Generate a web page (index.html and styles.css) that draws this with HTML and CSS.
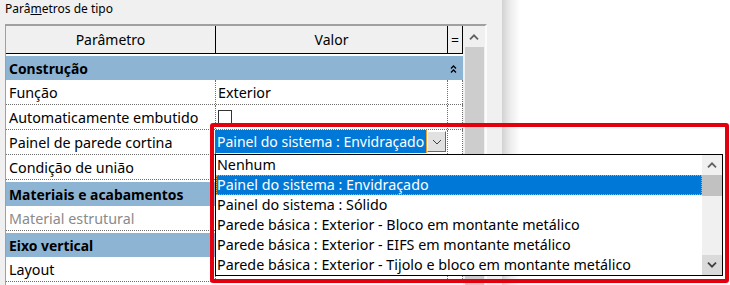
FILE: index.html
```html
<!DOCTYPE html>
<html lang="pt">
<head>
    <meta charset="UTF-8">
    <title>Parâmetros de tipo</title>
    <link rel="stylesheet" href="styles.css">
</head>
<body>

    <div class="panel">
        <div class="title">Parâ<u>m</u>etros de tipo</div>

        <div class="frame">
            <div class="grid">
                <div class="row head">
                    <div class="cell">Parâmetro</div>
                    <div class="cell">Valor</div>
                    <div class="cell">=</div>
                </div>

                <!-- Construção -->
                <div class="group">
                    <span>Construção</span>
                    <svg width="7" height="10" viewBox="0 0 7 10"><path d="M1 4.5 L3.5 2 L6 4.5 M1 8.5 L3.5 6 L6 8.5" fill="none" stroke="#000" stroke-width="1.3"/></svg>
                </div>
                <div class="row">
                    <div class="cell">Função</div>
                    <div class="cell">Exterior</div>
                    <div class="cell"></div>
                </div>
                <div class="row">
                    <div class="cell">Automaticamente embutido</div>
                    <div class="cell"><div class="check"></div></div>
                    <div class="cell"></div>
                </div>
                <div class="row">
                    <div class="cell">Painel de parede cortina</div>
                    <div class="cell edit">
                        <div class="combo">
                            <div class="combo-text">Painel do sistema : Envidraçado</div>
                            <div class="combo-btn">
                                <svg width="10" height="6" viewBox="0 0 10 6"><path d="M1 1 L5 5 L9 1" fill="none" stroke="#404040" stroke-width="1"/></svg>
                            </div>
                        </div>
                    </div>
                    <div class="cell"></div>
                </div>
                <div class="row">
                    <div class="cell">Condição de união</div>
                    <div class="cell"></div>
                    <div class="cell"></div>
                </div>

                <!-- Materiais e acabamentos -->
                <div class="group">
                    <span>Materiais e acabamentos</span>
                    <svg width="7" height="10" viewBox="0 0 7 10"><path d="M1 4.5 L3.5 2 L6 4.5 M1 8.5 L3.5 6 L6 8.5" fill="none" stroke="#000" stroke-width="1.3"/></svg>
                </div>
                <div class="row">
                    <div class="cell muted">Material estrutural</div>
                    <div class="cell"></div>
                    <div class="cell"></div>
                </div>

                <!-- Eixo vertical -->
                <div class="group">
                    <span>Eixo vertical</span>
                    <svg width="7" height="10" viewBox="0 0 7 10"><path d="M1 4.5 L3.5 2 L6 4.5 M1 8.5 L3.5 6 L6 8.5" fill="none" stroke="#000" stroke-width="1.3"/></svg>
                </div>
                <div class="row">
                    <div class="cell">Layout</div>
                    <div class="cell"></div>
                    <div class="cell"></div>
                </div>
            </div>

            <div class="vscroll">
                <div class="arrow">
                    <svg width="10" height="6" viewBox="0 0 10 6"><path d="M1 5.3 L5 1.3 L9 5.3" fill="none" stroke="#606060" stroke-width="1.8"/></svg>
                </div>
                <div class="thumb"></div>
            </div>
        </div>
    </div>
    <div class="shade"></div>

    <!-- open dropdown of the combo -->
    <div class="droplist">
        <div class="items">
            <div class="item">Nenhum</div>
            <div class="item sel">Painel do sistema : Envidraçado</div>
            <div class="item">Painel do sistema : Sólido</div>
            <div class="item">Parede básica : Exterior - Bloco em montante metálico</div>
            <div class="item">Parede básica : Exterior - EIFS em montante metálico</div>
            <div class="item">Parede básica : Exterior - Tijolo e bloco em montante metálico</div>
        </div>
        <div class="lscroll">
            <div class="arrow">
                <svg width="10" height="6" viewBox="0 0 10 6"><path d="M1 5.3 L5 1.3 L9 5.3" fill="none" stroke="#606060" stroke-width="1.8"/></svg>
            </div>
            <div class="lthumb"></div>
            <div class="track"></div>
            <div class="arrow down">
                <svg width="10" height="6" viewBox="0 0 10 6"><path d="M1 0.7 L5 4.7 L9 0.7" fill="none" stroke="#404040" stroke-width="1.8"/></svg>
            </div>
        </div>
    </div>

    <div class="callout"></div>

</body>
</html>
```

FILE: styles.css
```css
body {
    margin: 0;
    height: 285px;
    overflow: hidden;
    display: flex;
    position: relative;
    background-color: #fff;
    font-family: "Noto Sans", sans-serif;
    font-size: 14.3px;
    color: #000;
}
.panel {
    width: 502px;
    flex: none;
    background-color: #f0f0f0;
    display: flex;
    flex-direction: column;
}
.shade {
    width: 18px;
    flex: none;
    background: linear-gradient(to right, #d2d2d2, #ececec 45%, #fff);
}
.title {
    height: 24px;
    box-sizing: border-box;
    padding: 1px 5px 0;
    font-size: 12px;
    line-height: 16px;
}
.title u {
    text-underline-offset: 1px;
}
.frame {
    margin-left: 5px;
    width: 482px;
    flex: 1;
    min-height: 0;
    display: flex;
    box-sizing: border-box;
    border-top: 2px solid #a0a0a0;
    border-left: 1px solid #a0a0a0;
    border-right: 2px solid #fbfbfb;
}
.grid {
    width: 457px;
    background-color: #fff;
}
.row {
    display: grid;
    grid-template-columns: 210px 232px 15px;
    height: 25px;
    box-sizing: border-box;
    border-bottom: 1px dotted #6e6e6e;
}
.cell {
    box-sizing: border-box;
    border-right: 1px dotted #6e6e6e;
    padding-left: 3px;
    line-height: 25px;
    white-space: nowrap;
    overflow: hidden;
}
.row .cell:nth-child(2) {
    padding-left: 2px;
}
.head {
    height: 28px;
    background-color: #f0f0f0;
    border-bottom: 1px solid #000;
    font-size: 14px;
}
.head .cell,
.row.head .cell:nth-child(2) {
    border-right: 1px solid #000;
    text-align: center;
    line-height: 27px;
    padding: 0;
}
.group {
    height: 26px;
    box-sizing: border-box;
    border-top: 2px solid #fff;
    background-color: #8eb4d4;
    display: flex;
    align-items: center;
    justify-content: space-between;
    padding: 1px 6px 0 3px;
    font-weight: bold;
    font-size: 13.9px;
}
.muted {
    color: #8a8a8a;
}
.check {
    width: 14px;
    height: 14px;
    box-sizing: border-box;
    margin-top: 5px;
    border: 1px solid #333;
    background-color: #fff;
}
.row .cell.edit {
    padding: 0;
    overflow: visible;
}
.combo {
    display: flex;
    margin-left: -1px;
    height: 23px;
}
.combo-text {
    width: 212px;
    box-sizing: border-box;
    padding-left: 2px;
    background-color: #0078d7;
    color: #fff;
    border-right: 1px solid #f0a030;
    font-size: 14px;
    line-height: 23px;
    white-space: nowrap;
}
.combo-btn {
    width: 19px;
    height: 21px;
    margin-top: 1px;
    box-sizing: border-box;
    border: 1px solid;
    border-color: #fdfdfd #696969 #696969 #fdfdfd;
    background-color: #e1e1e1;
    display: flex;
    align-items: center;
    justify-content: center;
}
.vscroll {
    width: 22px;
    background-color: #f0f0f0;
    display: flex;
    flex-direction: column;
}
.arrow {
    height: 21px;
    flex: none;
    display: flex;
    align-items: center;
    justify-content: center;
}
.thumb {
    flex: 1;
    margin: 0 1px 0 2px;
    background-color: #cdcdcd;
}
.droplist {
    position: absolute;
    left: 215px;
    top: 154px;
    width: 508px;
    height: 122px;
    box-sizing: border-box;
    border: 1px solid #000;
    background-color: #fff;
    display: flex;
}
.items {
    flex: 1;
}
.item {
    height: 20px;
    line-height: 20px;
    padding-left: 1px;
    white-space: nowrap;
}
.item.sel {
    background-color: #0078d7;
    color: #fff;
    outline: 1px dotted #e8a040;
    outline-offset: -1px;
}
.lscroll {
    width: 20px;
    background-color: #f0f0f0;
    display: flex;
    flex-direction: column;
}
.lscroll .arrow {
    height: 20px;
}
.lthumb {
    height: 21px;
    background-color: #c1c1c1;
}
.track {
    flex: 1;
}
.arrow.down {
    background-color: #dadada;
}
.callout {
    position: absolute;
    left: 210px;
    top: 123px;
    width: 519px;
    height: 160px;
    box-sizing: border-box;
    border: 4px solid #e2000f;
    border-radius: 3px;
}
```
